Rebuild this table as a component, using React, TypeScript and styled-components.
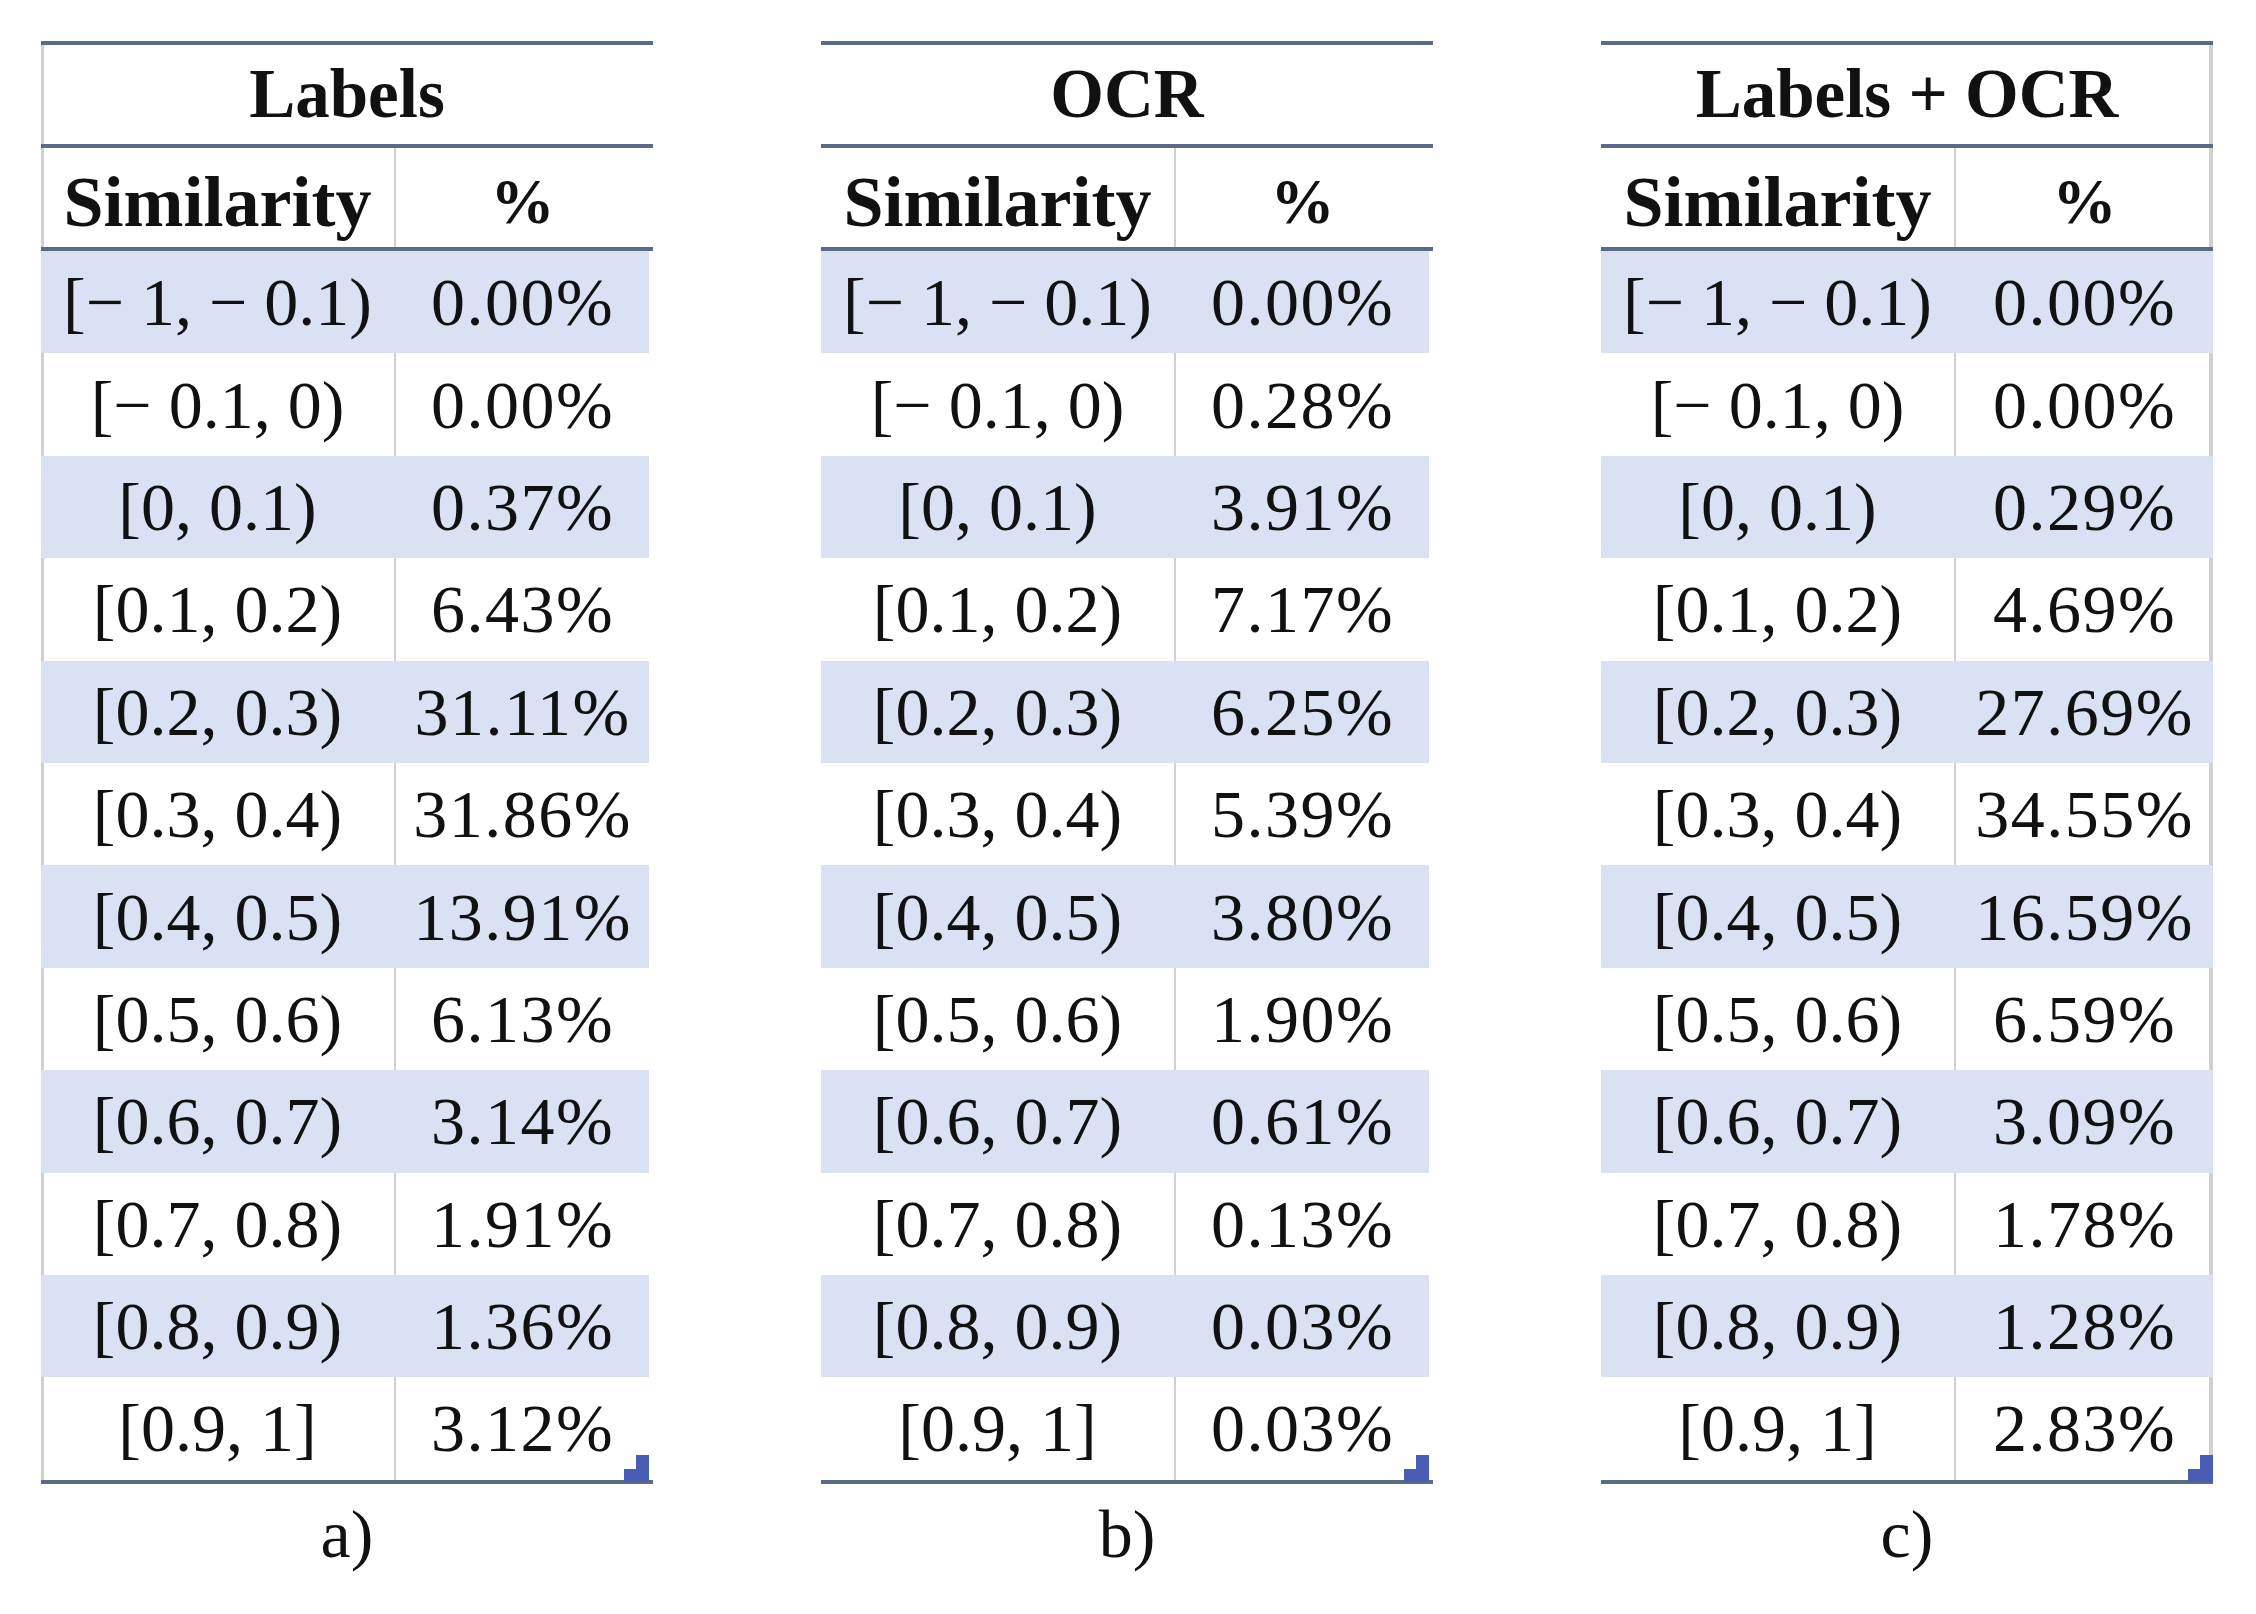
import React from "react";
import styled, { createGlobalStyle } from "styled-components";

const RULE = "#5b6a8b";
const SHADE = "#d9e1f2";
const GRID = "#d0d0d0";

type Edge = "left" | "right" | "none";

const GlobalStyle = createGlobalStyle`
  html, body { margin: 0; padding: 0; background: #ffffff; }
  body {
    font-family: "Liberation Serif", "Times New Roman", serif;
    color: #111111;
  }
`;

const Page = styled.main`
  width: 2256px;
  height: 1614px;
  box-sizing: border-box;
  padding: 41px 0 0 41px;
  display: flex;
  align-items: flex-start;
  gap: 168px;
`;

const Figure = styled.figure`
  margin: 0;
  width: 612px;
  display: flex;
  flex-direction: column;
`;

const Table = styled.div`
  position: relative;
  border-top: 4px solid ${RULE};
  border-bottom: 4px solid ${RULE};
`;

const rowShadow = (edge: Edge, trim: boolean, shaded: boolean) => {
  if (shaded) return trim ? "inset -4px 0 0 #ffffff" : "none";
  if (edge === "left") return `inset 3px 0 0 ${GRID}`;
  if (edge === "right") return `inset -4px 0 0 ${GRID}`;
  return "none";
};

const TitleRow = styled.div<{ $edge: Edge }>`
  height: 99px;
  display: flex;
  align-items: center;
  justify-content: center;
  border-bottom: 4px solid ${RULE};
  box-shadow: ${(p) => rowShadow(p.$edge, false, false)};
  font-weight: 700;
  font-size: 69px;
  line-height: 1;
`;

const Row = styled.div<{ $shaded?: boolean; $edge: Edge; $trim: boolean; $head?: boolean }>`
  display: grid;
  grid-template-columns: 355px 1fr;
  height: ${(p) => (p.$head ? "99px" : "102.4px")};
  background: ${(p) => (p.$shaded ? SHADE : "#ffffff")};
  box-shadow: ${(p) => rowShadow(p.$edge, p.$trim, !!p.$shaded)};
  border-bottom: ${(p) => (p.$head ? `4px solid ${RULE}` : "none")};
`;

const RangeCell = styled.div<{ $shaded?: boolean; $head?: boolean }>`
  display: flex;
  align-items: center;
  justify-content: center;
  box-sizing: border-box;
  border-right: 2px solid ${(p) => (p.$shaded ? "transparent" : GRID)};
  font-size: ${(p) => (p.$head ? "72px" : "68px")};
  font-weight: ${(p) => (p.$head ? 700 : 400)};
  padding-top: ${(p) => (p.$head ? "8px" : "0")};
  line-height: 1;
  white-space: pre;
`;

const PctCell = styled.div<{ $trim: boolean; $head?: boolean }>`
  display: flex;
  align-items: center;
  justify-content: center;
  box-sizing: border-box;
  padding-right: ${(p) => (p.$trim ? "4px" : "0")};
  padding-top: ${(p) => (p.$head ? "8px" : "0")};
  font-size: ${(p) => (p.$head ? "64px" : "68px")};
  font-weight: ${(p) => (p.$head ? 700 : 400)};
  letter-spacing: ${(p) => (p.$head ? "0" : "1.5px")};
  line-height: 1;
  white-space: pre;
`;

const Handle = styled.svg<{ $trim: boolean }>`
  position: absolute;
  right: ${(p) => (p.$trim ? "4px" : "0")};
  bottom: -2px;
  width: 25px;
  height: 27px;
`;

const Caption = styled.figcaption`
  margin-top: 16px;
  text-align: center;
  font-size: 68px;
  line-height: 68px;
`;

const RANGES = [
  "[\u2212 1, \u2212 0.1)",
  "[\u2212 0.1, 0)",
  "[0, 0.1)",
  "[0.1, 0.2)",
  "[0.2, 0.3)",
  "[0.3, 0.4)",
  "[0.4, 0.5)",
  "[0.5, 0.6)",
  "[0.6, 0.7)",
  "[0.7, 0.8)",
  "[0.8, 0.9)",
  "[0.9, 1]",
];

type TableData = {
  title: string;
  caption: string;
  edge: Edge;
  trim: boolean;
  values: string[];
};

const TABLES: TableData[] = [
  {
    title: "Labels",
    caption: "a)",
    edge: "left",
    trim: true,
    values: ["0.00%", "0.00%", "0.37%", "6.43%", "31.11%", "31.86%", "13.91%", "6.13%", "3.14%", "1.91%", "1.36%", "3.12%"],
  },
  {
    title: "OCR",
    caption: "b)",
    edge: "none",
    trim: true,
    values: ["0.00%", "0.28%", "3.91%", "7.17%", "6.25%", "5.39%", "3.80%", "1.90%", "0.61%", "0.13%", "0.03%", "0.03%"],
  },
  {
    title: "Labels + OCR",
    caption: "c)",
    edge: "right",
    trim: false,
    values: ["0.00%", "0.00%", "0.29%", "4.69%", "27.69%", "34.55%", "16.59%", "6.59%", "3.09%", "1.78%", "1.28%", "2.83%"],
  },
];

function SimilarityTable({ data }: { data: TableData }) {
  return (
    <Figure>
      <Table>
        <TitleRow $edge={data.edge}>{data.title}</TitleRow>
        <Row $head $edge={data.edge} $trim={data.trim}>
          <RangeCell $head>Similarity</RangeCell>
          <PctCell $head $trim={data.trim}>%</PctCell>
        </Row>
        {RANGES.map((r, i) => {
          const shaded = i % 2 === 0;
          return (
            <Row key={r} $shaded={shaded} $edge={data.edge} $trim={data.trim}>
              <RangeCell $shaded={shaded}>{r}</RangeCell>
              <PctCell $trim={data.trim}>{data.values[i]}</PctCell>
            </Row>
          );
        })}
        <Handle $trim={data.trim} viewBox="0 0 25 27">
          <polygon points="0,27 0,14 12,14 12,0 25,0 25,27" fill="#4a5db4" />
        </Handle>
      </Table>
      <Caption>{data.caption}</Caption>
    </Figure>
  );
}

export default function App() {
  return (
    <>
      <GlobalStyle />
      <Page>
        {TABLES.map((t) => (
          <SimilarityTable key={t.caption} data={t} />
        ))}
      </Page>
    </>
  );
}
